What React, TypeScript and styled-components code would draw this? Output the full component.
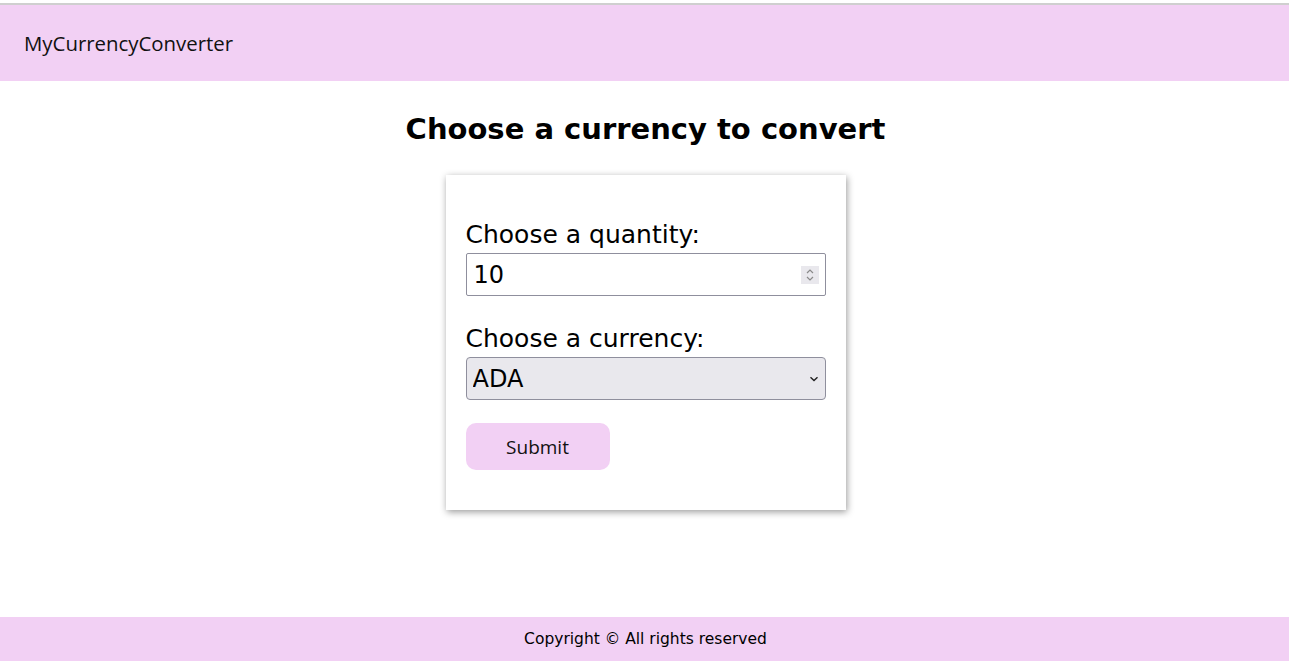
import React from "react";
import styled, { createGlobalStyle } from "styled-components";

const GlobalStyle = createGlobalStyle`
  html, body { margin: 0; padding: 0; background: #ffffff; }
  body { font-family: "Open Sans", "Noto Sans", sans-serif; color: #000; }
  * { box-sizing: border-box; }
`;

const PINK = "#f2d0f4";
const POP = `"DejaVu Sans", "Noto Sans", sans-serif`;
const UBU = `"Open Sans", "Noto Sans", sans-serif`;

const CHEVRON =
  "data:image/svg+xml;utf8," +
  encodeURIComponent(
    '<svg xmlns="http://www.w3.org/2000/svg" width="10" height="6" viewBox="0 0 10 6"><path d="M1.5 1.2 L5 4.6 L8.5 1.2" fill="none" stroke="#222" stroke-width="1.4"/></svg>'
  );

const Page = styled.div`
  min-height: 100vh;
  display: flex;
  flex-direction: column;
  padding-top: 3px;
`;

const Header = styled.header`
  background: ${PINK};
  border-top: 2px solid #cfcfcf;
  height: 78px;
  display: flex;
  align-items: center;
  padding-left: 24px;
`;

const Brand = styled.span`
  font-family: ${UBU};
  font-size: 20.4px;
  font-weight: 500;
  color: #111;
`;

const Main = styled.main`
  flex: 1;
  display: flex;
  flex-direction: column;
  align-items: center;
  padding-left: 2px;
`;

const Title = styled.h1`
  font-family: ${POP};
  font-size: 29px;
  font-weight: 700;
  line-height: 48px;
  margin: 24px 0 22px;
`;

const Card = styled.form`
  width: 400px;
  background: #fff;
  box-shadow: 1px 2px 7px rgba(0, 0, 0, 0.4);
  padding: 42px 20px 40px;
  display: flex;
  flex-direction: column;
`;

const Label = styled.label<{ $gap?: number }>`
  font-family: ${POP};
  font-size: 25px;
  line-height: 36px;
  margin-top: ${(p) => p.$gap ?? 0}px;
`;

const NumberBox = styled.div`
  height: 43px;
  border: 1px solid #8f8f9d;
  border-radius: 2px;
  display: flex;
  align-items: center;
  padding: 0 6px 0 7px;
`;

const NumberInput = styled.input`
  flex: 1;
  border: none;
  outline: none;
  font-family: ${POP};
  font-size: 24px;
  padding: 0;
  background: transparent;
  color: #000;
  &::-webkit-inner-spin-button,
  &::-webkit-outer-spin-button {
    -webkit-appearance: none;
    margin: 0;
  }
`;

const Spinner = styled.div`
  width: 18px;
  height: 18px;
  background: #e9e8ed;
  display: flex;
  align-items: center;
  justify-content: center;
`;

const Select = styled.select`
  height: 43px;
  width: 100%;
  appearance: none;
  -webkit-appearance: none;
  background: #e9e8ed url("${CHEVRON}") no-repeat right 6px center;
  border: 1px solid #8f8f9d;
  border-radius: 4px;
  font-family: ${POP};
  font-size: 24px;
  padding: 0 6px;
  color: #000;
`;

const Button = styled.button`
  margin-top: 23px;
  width: 144px;
  height: 47px;
  border: none;
  border-radius: 10px;
  background: ${PINK};
  font-family: ${UBU};
  font-size: 19px;
  color: #111;
  cursor: pointer;
`;

const Footer = styled.footer`
  background: ${PINK};
  height: 44px;
  display: flex;
  align-items: center;
  justify-content: center;
  font-family: ${POP};
  font-size: 15.5px;
  padding-left: 2px;
`;

export default function App() {
  return (
    <>
      <GlobalStyle />
      <Page>
        <Header>
          <Brand>MyCurrencyConverter</Brand>
        </Header>
        <Main>
          <Title>Choose a currency to convert</Title>
          <Card onSubmit={(e) => e.preventDefault()}>
            <Label htmlFor="qty">Choose a quantity:</Label>
            <NumberBox>
              <NumberInput id="qty" type="number" defaultValue={10} />
              <Spinner>
                <svg width="10" height="14" viewBox="0 0 10 14" fill="none" stroke="#8a8a8a" strokeWidth="1.2">
                  <path d="M2 5 L5 2 L8 5" />
                  <path d="M2 9 L5 12 L8 9" />
                </svg>
              </Spinner>
            </NumberBox>
            <Label htmlFor="cur" $gap={25}>Choose a currency:</Label>
            <Select id="cur" defaultValue="ADA">
              <option value="ADA">ADA</option>
              <option value="BTC">BTC</option>
              <option value="ETH">ETH</option>
              <option value="USD">USD</option>
              <option value="EUR">EUR</option>
            </Select>
            <Button type="submit">Submit</Button>
          </Card>
        </Main>
        <Footer>Copyright © All rights reserved</Footer>
      </Page>
    </>
  );
}
